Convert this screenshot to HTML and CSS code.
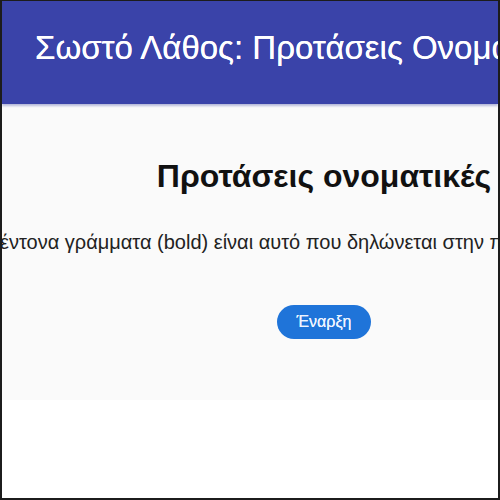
FILE: index.html
```html
<!DOCTYPE html>
<html lang="el">
<head>
<meta charset="utf-8">
<title>Σωστό Λάθος</title>
<link rel="stylesheet" href="styles.css">
</head>
<body>
<div class="frame">
  <header class="topbar">
    <h1 class="app-title">Σωστό Λάθος: Προτάσεις Ονοματικές</h1>
  </header>
  <main class="stage">
    <section class="intro">
      <h2 class="quiz-title">Προτάσεις ονοματικές</h2>
      <p class="quiz-desc">έντονα γράμματα (bold) είναι αυτό που δηλώνεται στην πρόταση</p>
      <button class="start-btn" type="button">Έναρξη</button>
    </section>
  </main>
</div>
</body>
</html>
```
FILE: styles.css
```css
html, body {
  margin: 0;
  padding: 0;
  background: #ffffff;
}
.frame {
  box-sizing: border-box;
  width: 500px;
  height: 500px;
  border: 2px solid #1c1c1c;
  border-top-width: 1px;
  overflow: hidden;
  background: #ffffff;
  font-family: "Liberation Sans", Arial, sans-serif;
}
.topbar {
  height: 103px;
  background: #3a43a9;
  display: flex;
  align-items: center;
  box-shadow: 0 2px 2px rgba(60, 70, 160, 0.35);
  position: relative;
  z-index: 1;
}
.app-title {
  margin: 0 0 10px 33px;
  color: #ffffff;
  font-weight: 400;
  font-size: 33px;
  white-space: nowrap;
  text-shadow: 0 0 0.6px #ffffff;
}
.stage {
  background: #fafafa;
  height: 296px;
  width: 644px;
}
.intro {
  display: flex;
  flex-direction: column;
  align-items: center;
  padding-top: 54px;
}
.quiz-title {
  margin: 0;
  font-size: 32px;
  font-weight: 700;
  color: #111111;
  white-space: nowrap;
}
.quiz-desc {
  align-self: flex-start;
  margin: 36px 0 0 -2px;
  font-size: 20px;
  color: #222222;
  white-space: nowrap;
}
.start-btn {
  margin-top: 51px;
  width: 94px;
  height: 34px;
  border: none;
  border-radius: 17px;
  background: #1f74d9;
  color: #eef4ff;
  font-family: "Liberation Sans", Arial, sans-serif;
  font-size: 16px;
  text-shadow: 0 0 0.5px #eef4ff;
}
```
